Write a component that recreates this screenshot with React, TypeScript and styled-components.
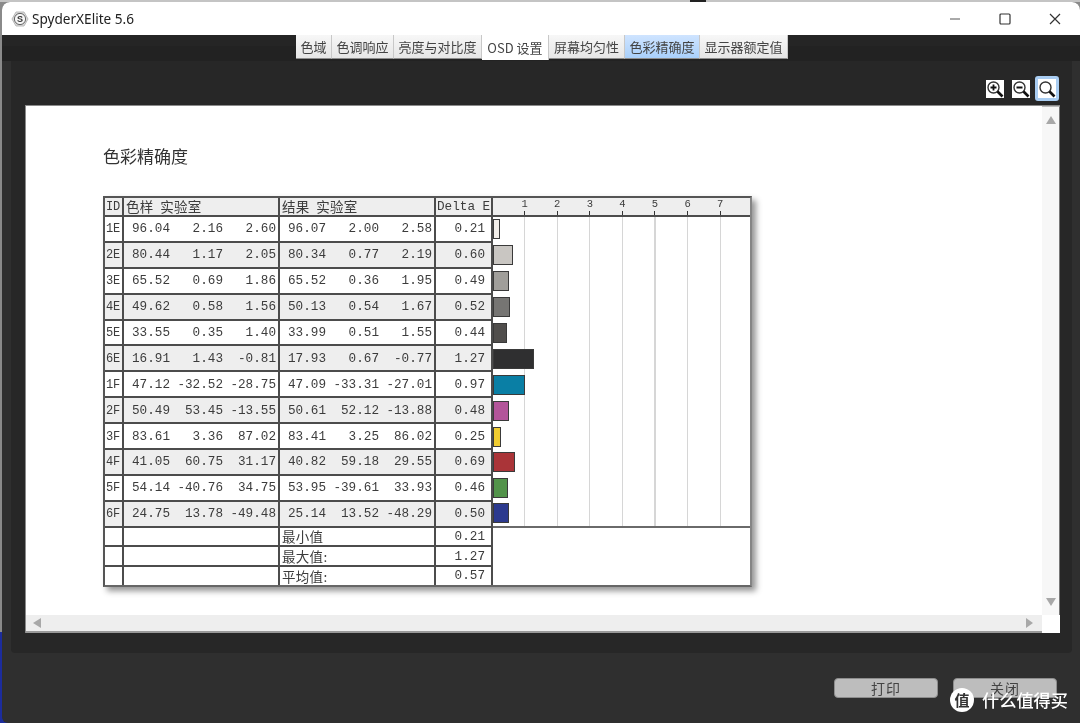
import React from 'react';
import styled, { createGlobalStyle } from 'styled-components';

const Global = createGlobalStyle`
  html, body { margin: 0; padding: 0; background: #777; }
  * { box-sizing: border-box; }
`;

const CJK = '"Noto Sans CJK SC", "Noto Sans", sans-serif';
const MONO = '"Liberation Mono", "Noto Sans CJK SC", monospace';

const Desktop = styled.div`
  position: relative;
  width: 1080px;
  height: 723px;
  overflow: hidden;
  padding: 2px 0 0 2px;
  background:
    linear-gradient(#222, #222) 690px 0 / 16px 2px no-repeat,
    linear-gradient(#c4c4c4, #c4c4c4) 0 0 / 100% 2px no-repeat,
    linear-gradient(to bottom, #8a8a8a 0 632px, #1c2c9c 632px 100%);
  filter: blur(0.5px);
`;
const Win = styled.div`
  width: 1078px;
  height: 721px;
  background: #2f2f2f;
  border-radius: 8px 8px 0 6px;
  overflow: hidden;
  display: flex;
  flex-direction: column;
`;
const TitleBar = styled.div`
  height: 33px;
  flex: none;
  background: #fff;
  display: flex;
  align-items: center;
  padding-left: 9px;
`;
const AppName = styled.span`
  font: 13.6px "Noto Sans", sans-serif;
  color: #222;
  margin-left: 3px;
`;
const Controls = styled.div`
  margin-left: auto;
  display: flex;
  align-items: center;
  color: #333;
`;
const ControlBtn = styled.div`
  width: 50px;
  height: 33px;
  display: flex;
  align-items: center;
  justify-content: center;
`;
const TabBand = styled.div`
  height: 26px;
  flex: none;
  background: linear-gradient(to bottom, #252525 0 11px, #222 11px 100%);
  display: flex;
  padding-left: 294px;
  align-items: flex-start;
`;
const Tab = styled.div<{ $w: number; $state?: 'on' | 'sel' }>`
  width: ${p => p.$w}px;
  height: ${p => (p.$state === 'sel' ? 25 : 24)}px;
  display: flex;
  align-items: center;
  justify-content: center;
  font: 13px ${CJK};
  color: #444;
  border-right: 1px solid #c8c8c8;
  border-bottom: ${p => (p.$state === 'sel' ? 'none' : '1px solid #8c8c8c')};
  background: ${p =>
    p.$state === 'on'
      ? 'linear-gradient(to bottom, #cfe4ff, #a9d0fb)'
      : p.$state === 'sel'
        ? '#fff'
        : 'linear-gradient(to bottom, #f7f7f7, #e6e6e6)'};
`;
const Panel = styled.div`
  margin: 0 8px 0 9px;
  height: 592px;
  flex: none;
  background: #272727;
  border-radius: 0 0 4px 4px;
  padding: 0 12px 20px 14px;
  display: flex;
  flex-direction: column;
`;
const Toolbar = styled.div`
  height: 44px;
  flex: none;
  display: flex;
  justify-content: flex-end;
  align-items: center;
  gap: 8px;
  padding-top: 11px;
  margin-right: 1px;
`;
const ToolBtn = styled.div<{ $active?: boolean }>`
  width: ${p => (p.$active ? 24 : 18)}px;
  height: ${p => (p.$active ? 25 : 18)}px;
  margin-left: ${p => (p.$active ? -3 : 0)}px;
  background: #fff;
  border: ${p => (p.$active ? '3px solid #a9cdf2' : 'none')};
  border-radius: ${p => (p.$active ? 3 : 0)}px;
  display: flex;
  align-items: center;
  justify-content: center;
`;
const Scroller = styled.div`
  flex: 1;
  display: grid;
  grid-template-columns: 1fr 18px;
  grid-template-rows: 1fr 18px;
  border-top: 1px solid #8a8a8a;
  border-left: 1px solid #8a8a8a;
  background: #fff;
  min-height: 0;
`;
const Content = styled.div`
  padding: 40px 0 0 77px;
  background: #fff;
  overflow: hidden;
`;
const VBar = styled.div`
  background: #f7f7f7;
  border-right: 1px solid #777;
  border-top: 1px solid #bbb;
  display: flex;
  flex-direction: column;
  align-items: center;
  justify-content: space-between;
  padding: 8px 0;
`;
const HBar = styled.div`
  background: #eeeeee;
  border-bottom: 2px solid #999;
  display: flex;
  align-items: center;
  justify-content: space-between;
  padding: 0 6px;
`;
const Corner = styled.div`
  background: #fff;
`;
const Title = styled.h1`
  margin: 0 0 30px;
  font: 400 17px/20px ${CJK};
  color: #333;
`;
const Table = styled.div`
  width: 649px;
  height: 391px;
  border: 2px solid #555;
  border-right-color: #858585;
  border-bottom-color: #666;
  box-shadow: 4px 4px 6px rgba(0, 0, 0, 0.42);
  background: #fff;
`;
const Row = styled.div<{ $h: number; $alt?: boolean }>`
  height: ${p => p.$h}px;
  display: grid;
  grid-template-columns: 19px 156px 156px 57px 1fr;
  background: ${p => (p.$alt ? '#eeeeee' : '#fff')};
  font: 12.67px/14px ${MONO};
  color: #3c3c3c;
  &:last-child > * { border-bottom: none; }
`;
const Cell = styled.div`
  border-right: 2px solid #4c4c4c;
  border-bottom: 2px solid #4c4c4c;
  display: flex;
  align-items: center;
  white-space: pre;
  padding-top: 1px;
`;
const IdCell = styled(Cell)`
  padding-left: 1px;
  font-size: 12px;
  letter-spacing: -0.2px;
`;
const LabelCell = styled(Cell)`
  padding-left: 2px;
  padding-top: 0;
  font: 13.5px/14px ${CJK};
  letter-spacing: 0.3px;
`;
const HeadLabel = styled(LabelCell)`
  padding-bottom: 2px;
`;
const Values = styled(Cell)`
  display: grid;
  grid-template-columns: 46px 53px 53px;
  align-items: center;
  text-align: right;
`;
const DeltaCell = styled(Cell)`
  justify-content: flex-end;
  padding-right: 6px;
`;
const DeltaHead = styled(Cell)`
  padding-left: 1px;
`;
const ScaleHead = styled.div`
  display: flex;
  padding-left: 15.3px;
  border-bottom: 2px solid #4c4c4c;
  background: #eeeeee;
`;
const Tick = styled.div`
  width: 32.6px;
  display: flex;
  flex-direction: column;
  align-items: center;
  justify-content: space-between;
  font-size: 10.5px;
  line-height: 12px;
  &::after {
    content: '';
    width: 1px;
    height: 4px;
    background: #333;
  }
`;
const Plot = styled.div<{ $last?: boolean }>`
  background: repeating-linear-gradient(90deg, transparent 0 31px, #d6d6d6 31px 32.3px, transparent 32.3px 32.6px);
  background-color: #fff;
  display: flex;
  align-items: center;
  border-bottom: ${p => (p.$last ? '2px solid #6a6a6a' : 'none')};
`;
const Bar = styled.div<{ $c: string }>`
  height: 20px;
  margin-top: -1px;
  background: ${p => p.$c};
  border: 1.5px solid #3a3a3a;
  border-left-width: 1px;
`;
const Blank = styled.div``;
const Footer = styled.div`
  flex: 1;
  display: flex;
  justify-content: flex-end;
  gap: 15px;
  padding: 25px 23px 0 0;
`;
const Button = styled.div`
  width: 104px;
  height: 20px;
  background: #bdbdbd;
  border: 1px solid #8d8d8d;
  border-radius: 4px;
  display: flex;
  align-items: center;
  justify-content: center;
  font: 14px/16px ${CJK};
  letter-spacing: 1px;
  color: #444;
`;
const Watermark = styled.div`
  position: absolute;
  left: 950px;
  top: 688px;
  height: 24px;
  display: flex;
  align-items: center;
  gap: 8px;
  color: #fff;
  font: 500 17.2px/24px ${CJK};
`;
const WmBadge = styled.div`
  width: 24px;
  height: 24px;
  border-radius: 50%;
  background: #fff;
  color: #333;
  font: 700 15px/24px ${CJK};
  display: flex;
  align-items: center;
  justify-content: center;
`;

type D = [string, string[], string[], string, string];
const rows: D[] = [
  ['1E', ['96.04', '2.16', '2.60'], ['96.07', '2.00', '2.58'], '0.21', '#f2eee9'],
  ['2E', ['80.44', '1.17', '2.05'], ['80.34', '0.77', '2.19'], '0.60', '#c9c6c2'],
  ['3E', ['65.52', '0.69', '1.86'], ['65.52', '0.36', '1.95'], '0.49', '#a09e9a'],
  ['4E', ['49.62', '0.58', '1.56'], ['50.13', '0.54', '1.67'], '0.52', '#767573'],
  ['5E', ['33.55', '0.35', '1.40'], ['33.99', '0.51', '1.55'], '0.44', '#504e4c'],
  ['6E', ['16.91', '1.43', '-0.81'], ['17.93', '0.67', '-0.77'], '1.27', '#2f2f30'],
  ['1F', ['47.12', '-32.52', '-28.75'], ['47.09', '-33.31', '-27.01'], '0.97', '#0a7fa5'],
  ['2F', ['50.49', '53.45', '-13.55'], ['50.61', '52.12', '-13.88'], '0.48', '#b3559a'],
  ['3F', ['83.61', '3.36', '87.02'], ['83.41', '3.25', '86.02'], '0.25', '#f0cc30'],
  ['4F', ['41.05', '60.75', '31.17'], ['40.82', '59.18', '29.55'], '0.69', '#aa3438'],
  ['5F', ['54.14', '-40.76', '34.75'], ['53.95', '-39.61', '33.93'], '0.46', '#52934a'],
  ['6F', ['24.75', '13.78', '-49.48'], ['25.14', '13.52', '-48.29'], '0.50', '#2c3a8e'],
];
const UNIT = 32.6;

const summary: [string, string, number][] = [
  ['最小值', '0.21', 19.6],
  ['最大值:', '1.27', 19.6],
  ['平均值:', '0.57', 18],
];

const Lens = ({ sign }: { sign?: 'plus' | 'minus' }) => (
  <svg width="18" height="18" viewBox="0 0 18 18" fill="none">
    <circle cx="7.5" cy="7.5" r="5.5" stroke="#333" strokeWidth="1.4" />
    <path d="M11.5 11.5L16.5 16.5" stroke="#111" strokeWidth="2.6" />
    {sign && <path d="M4.5 7.5h6" stroke="#111" strokeWidth="1.8" />}
    {sign === 'plus' && <path d="M7.5 4.5v6" stroke="#111" strokeWidth="1.8" />}
  </svg>
);

const Logo = () => (
  <svg width="18" height="18" viewBox="0 0 18 18">
    <path d="M5 2h8l4 7-4 7H5L1 9z" fill="#d8d8d8" stroke="#bbb" />
    <circle cx="9" cy="9" r="5.6" fill="#f6f6f6" stroke="#666" />
    <text x="9" y="12.2" textAnchor="middle" fontSize="9" fontWeight="700" fontFamily="Liberation Sans, sans-serif" fill="#333">S</text>
  </svg>
);

const Arrow = ({ dir }: { dir: 'up' | 'down' | 'left' | 'right' }) => {
  const d = { up: 'M6 1l5 8H1z', down: 'M1 1h10l-5 8z', left: 'M9 0v10L1 5z', right: 'M2 0v10l7-5z' }[dir];
  return (
    <svg width="12" height="10" viewBox="0 0 12 10">
      <path d={d} fill="#a8a8a8" />
    </svg>
  );
};

export default function App() {
  return (
    <Desktop>
      <Global />
      <Win>
        <TitleBar>
          <Logo />
          <AppName>SpyderXElite 5.6</AppName>
          <Controls>
            <ControlBtn>
              <svg width="12" height="12" viewBox="0 0 12 12"><path d="M1 6h10" stroke="#555" strokeWidth="1" /></svg>
            </ControlBtn>
            <ControlBtn>
              <svg width="12" height="12" viewBox="0 0 12 12"><rect x="1" y="1" width="10" height="10" rx="1" fill="none" stroke="#333" strokeWidth="1.2" /></svg>
            </ControlBtn>
            <ControlBtn>
              <svg width="12" height="12" viewBox="0 0 12 12"><path d="M1 1l10 10M11 1L1 11" stroke="#333" strokeWidth="1.2" /></svg>
            </ControlBtn>
          </Controls>
        </TitleBar>
        <TabBand>
          <Tab $w={36}>色域</Tab>
          <Tab $w={62}>色调响应</Tab>
          <Tab $w={88}>亮度与对比度</Tab>
          <Tab $w={67} $state="sel">OSD 设置</Tab>
          <Tab $w={76}>屏幕均匀性</Tab>
          <Tab $w={75} $state="on">色彩精确度</Tab>
          <Tab $w={88}>显示器额定值</Tab>
        </TabBand>
        <Panel>
          <Toolbar>
            <ToolBtn><Lens sign="plus" /></ToolBtn>
            <ToolBtn><Lens sign="minus" /></ToolBtn>
            <ToolBtn $active><Lens /></ToolBtn>
          </Toolbar>
          <Scroller>
            <Content>
              <Title>色彩精确度</Title>
              <Table>
                <Row $h={19} $alt>
                  <IdCell>ID</IdCell>
                  <HeadLabel>{'色样  实验室'}</HeadLabel>
                  <HeadLabel>{'结果  实验室'}</HeadLabel>
                  <DeltaHead>Delta E</DeltaHead>
                  <ScaleHead>
                    {[1, 2, 3, 4, 5, 6, 7].map(n => (
                      <Tick key={n}>{n}</Tick>
                    ))}
                  </ScaleHead>
                </Row>
                {rows.map((r, i) => (
                  <Row key={r[0]} $h={25.9} $alt={i % 2 === 1}>
                    <IdCell>{r[0]}</IdCell>
                    <Values>{r[1].map((v, k) => <span key={k}>{v}</span>)}</Values>
                    <Values>{r[2].map((v, k) => <span key={k}>{v}</span>)}</Values>
                    <DeltaCell>{r[3]}</DeltaCell>
                    <Plot $last={i === rows.length - 1}>
                      <Bar $c={r[4]} style={{ width: parseFloat(r[3]) * UNIT }} />
                    </Plot>
                  </Row>
                ))}
                {summary.map(([l, v, h]) => (
                  <Row key={l} $h={h}>
                    <IdCell />
                    <Cell />
                    <LabelCell>{l}</LabelCell>
                    <DeltaCell>{v}</DeltaCell>
                    <Blank />
                  </Row>
                ))}
              </Table>
            </Content>
            <VBar>
              <Arrow dir="up" />
              <Arrow dir="down" />
            </VBar>
            <HBar>
              <Arrow dir="left" />
              <Arrow dir="right" />
            </HBar>
            <Corner />
          </Scroller>
        </Panel>
        <Footer>
          <Button>打印</Button>
          <Button>关闭</Button>
        </Footer>
      </Win>
      <Watermark>
        <WmBadge>值</WmBadge>
        什么值得买
      </Watermark>
    </Desktop>
  );
}
